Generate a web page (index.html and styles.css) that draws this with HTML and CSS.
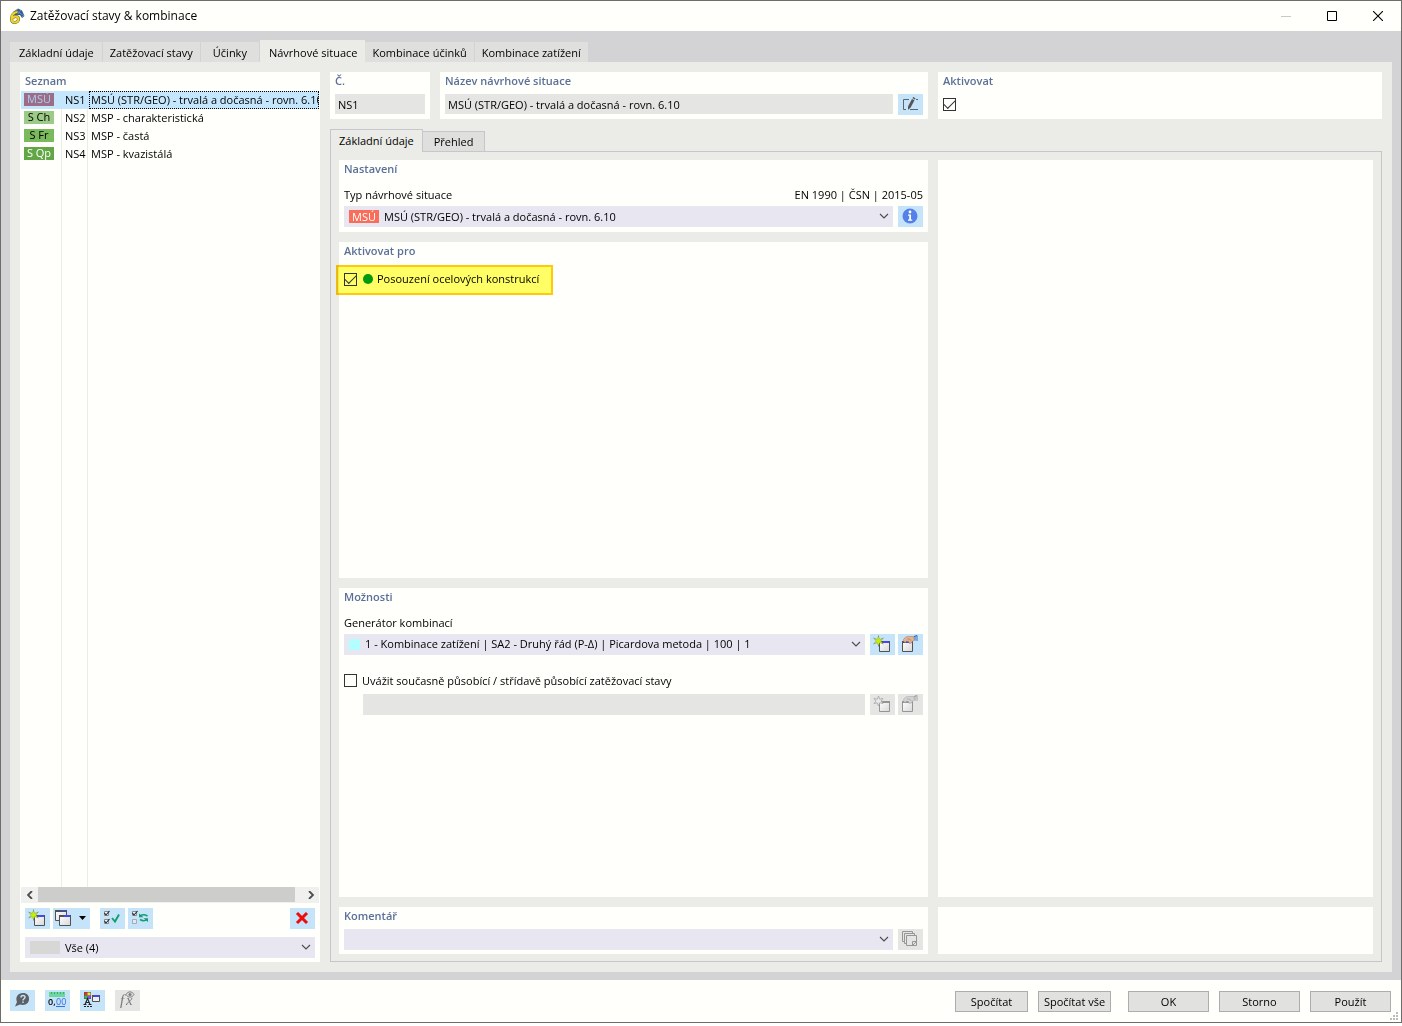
FILE: index.html
```html
<!DOCTYPE html>
<html lang="cs">
<head>
    <meta charset="UTF-8">
    <meta name="viewport" content="width=device-width, initial-scale=1.0">
    <title>Zatěžovací stavy &amp; kombinace</title>
    <link rel="stylesheet" href="styles.css">
</head>
<body>
    <svg class="symbols" aria-hidden="true">
        <defs>
            <linearGradient id="sheet" x1="0" y1="0" x2="1" y2="1">
                <stop offset="0" stop-color="#fff"/>
                <stop offset="1" stop-color="#d8d8d8"/>
            </linearGradient>
        </defs>
        <symbol id="chevron" viewBox="0 0 10 6">
            <path d="M1 1l4 4 4-4" fill="none" stroke="#4b4b4b" stroke-width="1.1"/>
        </symbol>
        <symbol id="new" viewBox="0 0 25 21">
            <path d="M9.500 7.500h10v10h-10z" fill="url(#sheet)" stroke="#4f5255"/>
            <path d="M9 7h11v2H9z" fill="#4f5255"/>
            <path d="M13 7h6v2h-6z" fill="#4747ee"/>
            <path d="M8.500 1.500v11M3.500 4l10 6M13.500 4l-10 6" stroke="#6b7a6a" stroke-width=".8"/>
            <path d="M8.500 2.500l1.200 2.700 2.800-.4-1.600 2.200 1.600 2.200-2.800-.4-1.200 2.700-1.200-2.700-2.800.4 1.600-2.200-1.600-2.200 2.800.4z" fill="#c3f000" stroke="#7d9440" stroke-width=".4"/>
        </symbol>
        <symbol id="new-off" viewBox="0 0 25 21">
            <path d="M9.500 7.500h10v10h-10z" fill="url(#sheet)" stroke="#949494"/>
            <path d="M9 7h11v2H9z" fill="#949494"/>
            <path d="M8.500 2l1.200 3.200 3.300-.7-2 2.500 2 2.500-3.300-.7-1.200 3.200-1.200-3.200-3.300.7 2-2.500-2-2.500 3.300.7z" fill="#e9e9e9" stroke="#a5a5a5" stroke-width=".8"/>
        </symbol>
        <symbol id="edit" viewBox="0 0 25 21">
            <path d="M4.500 7.500h10v10h-10z" fill="url(#sheet)" stroke="#4f5255"/>
            <path d="M4 7h11v2H4z" fill="#4f5255"/>
            <path d="M8 7h6v2H8z" fill="#4747ee"/>
            <path d="M15 3l3-1.500h2v5.500l-4-.5z" fill="#78a9e0"/>
            <path d="M16 2.500l3-1" stroke="#35639c"/>
            <path d="M5.500 5.500c1-2 3-3 5-3h5l1 3.500-2 1-1 2-2 .5-1-2-2-.5-1 1.500-1.500-.5z" fill="#e3b494" stroke="#a5714e" stroke-width=".5"/>
            <path d="M9 5h3l1 2" fill="none" stroke="#a5714e" stroke-width=".6"/>
        </symbol>
        <symbol id="edit-off" viewBox="0 0 25 21">
            <path d="M4.500 7.500h10v10h-10z" fill="url(#sheet)" stroke="#949494"/>
            <path d="M4 7h11v2H4z" fill="#949494"/>
            <path d="M15 3l3-1.500h2v5.500l-4-.5z" fill="#c6c6c6"/>
            <path d="M16 2.500l3-1" stroke="#9a9a9a"/>
            <path d="M5.500 5.500c1-2 3-3 5-3h5l1 3.500-2 1-1 2-2 .5-1-2-2-.5-1 1.500-1.500-.5z" fill="#d3d3d3" stroke="#a0a0a0" stroke-width=".5"/>
            <path d="M9 5h3l1 2" fill="none" stroke="#a0a0a0" stroke-width=".6"/>
        </symbol>
    </svg>

    <div class="window">
        <header class="titlebar">
            <svg class="app-icon" viewBox="0 0 16 16" aria-hidden="true">
                <path d="M4 4l5-3.500 4 2 2.500 5.500-2.500 2-2-3H6z" fill="#2f5c94"/>
                <path d="M6 2l8 5M9 1L6 5M12 2L9 6M15 7l-2 2" stroke="#7ba0c8" stroke-width=".7"/>
                <path d="M8.500 4C5 4.500 2.500 7 2.500 10.500S4 14.500 6 14.500s3.500-1.500 3.500-3.300S8 8.500 6.500 8.500s-2.500 1-3.500 2" fill="none" stroke="#6a6020" stroke-width="3"/>
                <path d="M8.500 4C5 4.500 2.500 7 2.500 10.500S4 14.500 6 14.500s3.500-1.500 3.500-3.300S8 8.500 6.500 8.500s-2.500 1-3.500 2" fill="none" stroke="#f0d62a" stroke-width="2"/>
            </svg>
            <h1>Zatěžovací stavy &amp; kombinace</h1>
            <div class="window-buttons">
                <button type="button" aria-label="Minimalizovat" disabled>
                    <svg viewBox="0 0 10 10"><path d="M0 5.500h10" stroke="#c9cac7"/></svg>
                </button>
                <button type="button" aria-label="Maximalizovat">
                    <svg viewBox="0 0 10 10"><path d="M.5.5h9v9h-9z" fill="none" stroke="#000"/></svg>
                </button>
                <button type="button" aria-label="Zavřít">
                    <svg viewBox="0 0 10 10"><path d="M0 0l10 10M10 0L0 10" stroke="#000" stroke-width="1.100"/></svg>
                </button>
            </div>
        </header>

        <main class="content">
            <nav class="tabs">
                <button type="button" class="tab tab-first">Základní údaje</button>
                <button type="button" class="tab">Zatěžovací stavy</button>
                <button type="button" class="tab tab-short">Účinky</button>
                <button type="button" class="tab active">Návrhové situace</button>
                <button type="button" class="tab">Kombinace účinků</button>
                <button type="button" class="tab">Kombinace zatížení</button>
            </nav>

            <div class="page">
                <section class="list-panel">
                    <h2>Seznam</h2>
                    <div class="list">
                        <table>
                            <tbody>
                                <tr class="selected">
                                    <td class="col-badge"><span class="badge badge-uls-selected">MSÚ</span></td>
                                    <td class="col-no">NS1</td>
                                    <td class="col-name">MSÚ (STR/GEO) - trvalá a dočasná - rovn. 6.10</td>
                                </tr>
                                <tr>
                                    <td class="col-badge"><span class="badge badge-ch">S Ch</span></td>
                                    <td class="col-no">NS2</td>
                                    <td class="col-name">MSP - charakteristická</td>
                                </tr>
                                <tr>
                                    <td class="col-badge"><span class="badge badge-fr">S Fr</span></td>
                                    <td class="col-no">NS3</td>
                                    <td class="col-name">MSP - častá</td>
                                </tr>
                                <tr>
                                    <td class="col-badge"><span class="badge badge-qp">S Qp</span></td>
                                    <td class="col-no">NS4</td>
                                    <td class="col-name">MSP - kvazistálá</td>
                                </tr>
                            </tbody>
                        </table>
                    </div>
                    <div class="scrollbar">
                        <button type="button" aria-label="Posunout vlevo">
                            <svg viewBox="0 0 6 8"><path d="M5 0L1 4l4 4" fill="none" stroke="#4b4b4b" stroke-width="1.800"/></svg>
                        </button>
                        <div class="scroll-thumb"></div>
                        <button type="button" aria-label="Posunout vpravo">
                            <svg viewBox="0 0 6 8"><path d="M1 0l4 4-4 4" fill="none" stroke="#4b4b4b" stroke-width="1.800"/></svg>
                        </button>
                    </div>
                    <div class="toolbar">
                        <button type="button" class="icon-button" aria-label="Nový"><svg viewBox="0 0 25 21"><use href="#new"/></svg></button>
                        <button type="button" class="icon-button wide" aria-label="Kopírovat">
                            <svg viewBox="0 0 37 21">
                                <path d="M2.500 2.500h11v10h-11z" fill="url(#sheet)" stroke="#4f5255"/>
                                <path d="M2 2h12v2H2z" fill="#4f5255"/>
                                <path d="M8 2h5v1H8z" fill="#4747ee"/>
                                <path d="M6.500 7.500h11v10h-11z" fill="url(#sheet)" stroke="#4f5255"/>
                                <path d="M6 7h12v2H6z" fill="#4f5255"/>
                                <path d="M11 7h6v2h-6z" fill="#4747ee"/>
                                <path d="M26 8h7l-3.500 4z" fill="#000"/>
                            </svg>
                        </button>
                        <button type="button" class="icon-button group-start" aria-label="Vybrat vše">
                            <svg viewBox="0 0 25 21">
                                <path d="M4.500 3.500h4v4h-4zM4.500 11.500h4v4h-4z" fill="#f2f6fa" stroke="#8a8a8a"/>
                                <path d="M4.500 5l1.500 2 3.500-4M4.500 13l1.500 2 3.500-4" fill="none" stroke="#222" stroke-width="1.100"/>
                                <path d="M12 10l3 3.500 4-7" fill="none" stroke="#10a070" stroke-width="1.900"/>
                            </svg>
                        </button>
                        <button type="button" class="icon-button" aria-label="Obrátit výběr">
                            <svg viewBox="0 0 25 21">
                                <path d="M4.500 3.500h4v4h-4z" fill="#f2f6fa" stroke="#8a8a8a"/>
                                <path d="M4.500 11.500h4v4h-4z" fill="#dcebf7" stroke="#a3abb3"/>
                                <path d="M4.500 5l1.500 2 3.500-4" fill="none" stroke="#222" stroke-width="1.100"/>
                                <path d="M12 8c2-1.500 5-1.500 7.500 0M19 11.500c-2 1.500-4.500 1.500-7 0" fill="none" stroke="#10a070" stroke-width="1.500"/>
                                <path d="M11 5.500v3.800h4.500zM20 14v-3.800h-4.500z" fill="#10a070"/>
                            </svg>
                        </button>
                        <button type="button" class="icon-button push-right" aria-label="Smazat">
                            <svg viewBox="0 0 25 21"><path d="M7 5l10 10M17 5L7 15" stroke="#f00a0a" stroke-width="3"/></svg>
                        </button>
                    </div>
                    <div class="combo">
                        <span class="swatch-gray"></span>
                        <select aria-label="Filtr seznamu"><option>Vše (4)</option></select>
                        <svg class="arrow"><use href="#chevron"/></svg>
                    </div>
                </section>

                <div class="detail">
                    <div class="head">
                        <section class="card">
                            <h2><label for="number">Č.</label></h2>
                            <input type="text" id="number" class="text-input" value="NS1" readonly>
                        </section>
                        <section class="card">
                            <h2><label for="name">Název návrhové situace</label></h2>
                            <div class="field-row">
                                <input type="text" id="name" class="text-input" value="MSÚ (STR/GEO) - trvalá a dočasná - rovn. 6.10" readonly>
                                <button type="button" class="icon-button" aria-label="Upravit název">
                                    <svg viewBox="0 0 25 21">
                                        <path d="M11 5.500H5.500v10H8M12 15.500h8M18 5.500h2" fill="none" stroke="#5f6468"/>
                                        <path d="M10 12.500l4-7.500 2.500 1.200-4 7.500-2.500 2z" fill="#555"/>
                                        <path d="M14.500 4.200l.7-1.200 2.300 1.200-.6 1.200z" fill="#555"/>
                                    </svg>
                                </button>
                            </div>
                        </section>
                        <section class="card">
                            <h2><label for="active">Aktivovat</label></h2>
                            <div class="field-row"><input type="checkbox" id="active" checked></div>
                        </section>
                    </div>

                    <nav class="subtabs">
                        <button type="button" class="subtab active">Základní údaje</button>
                        <button type="button" class="subtab">Přehled</button>
                    </nav>

                    <div class="tab-page">
                        <div class="stack">
                            <section class="card settings">
                                <h2>Nastavení</h2>
                                <div class="caption">
                                    <label for="type">Typ návrhové situace</label>
                                    <span>EN 1990 | ČSN | 2015-05</span>
                                </div>
                                <div class="field-row">
                                    <div class="combo">
                                        <span class="badge badge-uls">MSÚ</span>
                                        <select id="type"><option>MSÚ (STR/GEO) - trvalá a dočasná - rovn. 6.10</option></select>
                                        <svg class="arrow"><use href="#chevron"/></svg>
                                    </div>
                                    <button type="button" class="icon-button" aria-label="Informace">
                                        <svg viewBox="0 0 25 21">
                                            <circle cx="12" cy="10" r="7.500" fill="#5580ea"/>
                                            <path d="M10 8.500h3v5h1.200v1.200h-4.200v-1.200h1.200v-3.800H10z" fill="#fff"/>
                                            <circle cx="12" cy="6" r="1.400" fill="#fff"/>
                                        </svg>
                                    </button>
                                </div>
                            </section>

                            <section class="card activate-for">
                                <h2>Aktivovat pro</h2>
                                <label class="highlight">
                                    <input type="checkbox" checked>
                                    <span class="dot"></span>
                                    Posouzení ocelových konstrukcí
                                </label>
                            </section>

                            <section class="card options">
                                <h2>Možnosti</h2>
                                <div class="caption"><label for="generator">Generátor kombinací</label></div>
                                <div class="field-row">
                                    <div class="combo">
                                        <span class="swatch-cyan"></span>
                                        <select id="generator"><option>1 - Kombinace zatížení | SA2 - Druhý řád (P-Δ) | Picardova metoda | 100 | 1</option></select>
                                        <svg class="arrow"><use href="#chevron"/></svg>
                                    </div>
                                    <div class="button-pair">
                                        <button type="button" class="icon-button" aria-label="Nový generátor"><svg viewBox="0 0 25 21"><use href="#new"/></svg></button>
                                        <button type="button" class="icon-button" aria-label="Upravit generátor"><svg viewBox="0 0 25 21"><use href="#edit"/></svg></button>
                                    </div>
                                </div>
                                <label class="check-row">
                                    <input type="checkbox" id="concurrent">
                                    Uvážit současně působící / střídavě působící zatěžovací stavy
                                </label>
                                <div class="field-row indented">
                                    <select class="disabled-select" aria-label="Současně působící zatěžovací stavy" disabled><option></option></select>
                                    <div class="button-pair">
                                        <button type="button" class="icon-button" aria-label="Nový" disabled><svg viewBox="0 0 25 21"><use href="#new-off"/></svg></button>
                                        <button type="button" class="icon-button" aria-label="Upravit" disabled><svg viewBox="0 0 25 21"><use href="#edit-off"/></svg></button>
                                    </div>
                                </div>
                            </section>
                        </div>

                        <section class="card"></section>

                        <section class="card">
                            <h2><label for="comment">Komentář</label></h2>
                            <div class="field-row">
                                <div class="combo">
                                    <select id="comment"><option></option></select>
                                    <svg class="arrow"><use href="#chevron"/></svg>
                                </div>
                                <button type="button" class="icon-button" aria-label="Použít komentář" disabled>
                                    <svg viewBox="0 0 25 21">
                                        <path d="M6.500 12.500h-2v-10h10v2M8.500 14.500h-2v-10h10v2M8.500 6.500h10v10h-10z" fill="none" stroke="#979797"/>
                                        <path d="M14.500 16v-3.500H18M15 16l3-3" fill="none" stroke="#979797"/>
                                    </svg>
                                </button>
                            </div>
                        </section>

                        <section class="card"></section>
                    </div>
                </div>
            </div>
        </main>

        <footer class="footer">
            <div class="tools">
                <button type="button" class="icon-button" aria-label="Nápověda">
                    <svg viewBox="0 0 25 21">
                        <path d="M5 16.500l2-4.500C5 7 8 3 13 3c4 0 6 2.500 6 6 0 4.500-4 7-9 5.500z" fill="#5c6064"/>
                        <path d="M11 7.500c0-2.500 4-2.500 4-.3 0 1.600-2 1.500-2 3.200M13 11.500v1.500" fill="none" stroke="#c5e2f8" stroke-width="1.500"/>
                    </svg>
                </button>
                <button type="button" class="icon-button" aria-label="Jednotky a desetinná místa">
                    <svg viewBox="0 0 25 21">
                        <path d="M4 2h16v5H4z" fill="#6fd79d"/>
                        <path d="M6.500 2v2M9.500 2v2M12.500 2v2M15.500 2v2M18.500 2v2" stroke="#2fa467" stroke-width=".8"/>
                        <text x="3" y="15" class="icon-digits">0,</text>
                        <text x="11" y="15" class="icon-digits blue">00</text>
                        <path d="M11 16.500h9" stroke="#3b6be0"/>
                    </svg>
                </button>
                <button type="button" class="icon-button" aria-label="Zobrazení">
                    <svg viewBox="0 0 25 21">
                        <path d="M4 2h7v7H4z" fill="#555"/>
                        <path d="M4.500 2.500h3v3h-3z" fill="#f22"/>
                        <path d="M7.500 2.500h3v3h-3z" fill="#f3e52b"/>
                        <path d="M4.500 5.500h3v3h-3z" fill="#25c84a"/>
                        <path d="M7.500 5.500h3v3h-3z" fill="#8a4bf0"/>
                        <path d="M5 14.500l2.500-6 2.500 6M6 12.500h3M3.500 14.500h3M8.500 14.500h3" fill="none" stroke="#222" stroke-width="1.100"/>
                        <path d="M4 16.500h8" stroke="#222" stroke-dasharray="2 1"/>
                        <path d="M12.500 5.500h7v6h-7z" fill="#eee" stroke="#4f5255"/>
                        <path d="M12 5h8v2h-8z" fill="#4f5255"/>
                        <path d="M14 5h5v2h-5z" fill="#4747ee"/>
                    </svg>
                </button>
                <button type="button" class="icon-button" aria-label="Vzorec" disabled>
                    <svg viewBox="0 0 25 21">
                        <text x="5" y="15" class="icon-formula">f</text>
                        <text x="11" y="15" class="icon-formula">x</text>
                        <path d="M11 4.500c2-3.500 6-3.500 8 0-2 3.500-6 3.500-8 0z" fill="#e4e4e2" stroke="#7f7f7f"/>
                        <circle cx="15" cy="4.500" r="1.600" fill="#7f7f7f"/>
                    </svg>
                </button>
            </div>
            <div class="actions">
                <button type="button" class="action">Spočítat</button>
                <button type="button" class="action">Spočítat vše</button>
                <button type="button" class="action main-action first-main">OK</button>
                <button type="button" class="action main-action">Storno</button>
                <button type="button" class="action main-action">Použít</button>
            </div>
            <svg class="grip" viewBox="0 0 8 8" aria-hidden="true">
                <path d="M6 0h2v2H6zM3 3h2v2H3zM6 3h2v2H6zM0 6h2v2H0zM3 6h2v2H3zM6 6h2v2H6z" fill="#bcbcbc"/>
            </svg>
        </footer>
    </div>
</body>
</html>
```

FILE: styles.css
```css
* {
    box-sizing: border-box;
}
body {
    margin: 0;
    background-color: #fff;
    color: #000;
    font-family: "Open Sans", "Noto Sans", sans-serif;
    font-size: 11px;
    line-height: 18px;
}
button, input, select {
    font: inherit;
    color: inherit;
    margin: 0;
    padding: 0;
    border: none;
    border-radius: 0;
}
h1, h2 {
    margin: 0;
}
h1 {
    font-size: 12px;
    font-weight: normal;
}
h2 {
    height: 18px;
    margin-bottom: 4px;
    font-size: 11px;
    font-weight: 600;
    color: #5b7099;
}
svg {
    display: block;
}
.symbols {
    position: absolute;
    width: 0;
    height: 0;
}
.window {
    display: flex;
    flex-direction: column;
    min-height: calc(100vh - 3px);
    border: 1px solid #6d6d6b;
    background-color: #fffffc;
}

/* title bar */
.titlebar {
    display: flex;
    align-items: center;
    height: 30px;
    padding-left: 8px;
}
.app-icon {
    width: 16px;
    height: 16px;
    margin-right: 5px;
}
.window-buttons {
    display: flex;
    margin-left: auto;
}
.window-buttons button {
    display: flex;
    align-items: center;
    justify-content: center;
    width: 46px;
    height: 28px;
    background: none;
}
.window-buttons svg {
    width: 10px;
    height: 10px;
}

/* main tabs */
.content {
    flex: 1;
    display: flex;
    flex-direction: column;
    padding: 9px 9px 8px;
    background-color: #d3d3d6;
}
.tabs {
    display: flex;
    align-items: flex-end;
    height: 22px;
}
.tab {
    height: 20px;
    padding: 2px 7px 0;
    border-right: 1px solid #d3d3d6;
    background-color: #dfdfdd;
}
.tab-first {
    padding-left: 9px;
    padding-right: 8px;
}
.tab-short {
    padding: 2px 12px 0;
}
.tab.active {
    height: 22px;
    padding: 4px 8px 0 9px;
    border-right: none;
    background-color: #ebece8;
}
.page {
    flex: 1;
    display: flex;
    gap: 10px;
    padding: 10px;
    background-color: #ebece8;
}

/* list */
.list-panel {
    display: flex;
    flex-direction: column;
    width: 300px;
    padding-bottom: 4px;
    background-color: #fffffc;
}
.list-panel h2 {
    margin: 0 5px 1px;
}
.list {
    flex: 1;
    margin: 0 1px;
    overflow: hidden;
    background-image: linear-gradient(#ebece8, #ebece8), linear-gradient(#ebece8, #ebece8);
    background-repeat: no-repeat;
    background-position: 40px 0, 66px 0;
    background-size: 1px 100%;
}
.list table {
    width: 100%;
    table-layout: fixed;
    border-collapse: collapse;
}
.list td {
    height: 18px;
    padding: 0;
    line-height: 18px;
    white-space: nowrap;
    overflow: hidden;
}
.list .col-badge {
    width: 40px;
    padding: 0 0 1px 3px;
    vertical-align: middle;
}
.list .col-no {
    width: 28px;
    padding-left: 4px;
}
.list .col-name {
    padding-left: 2px;
}
.list .selected {
    background-color: #c5e7fe;
}
.list .selected .col-name {
    outline: 1px dotted #000;
    outline-offset: -1px;
}
.badge {
    display: block;
    flex: none;
    width: 30px;
    height: 13px;
    line-height: 13px;
    text-align: center;
}
.list .badge {
    line-height: 12px;
}
.badge-uls {
    background-color: #f86e5a;
    color: #fff;
}
.badge-uls-selected {
    background-color: #9d6d88;
    color: #a9cdf3;
}
.badge-ch {
    background-color: #9ccb87;
}
.badge-fr {
    background-color: #7ab95c;
}
.badge-qp {
    background-color: #63a645;
    color: #fff;
}
.scrollbar {
    display: flex;
    height: 16px;
    margin: 0 1px 5px;
    background-color: #f0f0ee;
}
.scrollbar button {
    display: flex;
    align-items: center;
    justify-content: center;
    width: 17px;
    background: none;
}
.scrollbar svg {
    width: 6px;
    height: 8px;
}
.scroll-thumb {
    flex: 1;
    height: 15px;
    margin-right: 7px;
    background-color: #cdcdcb;
}
.toolbar {
    display: flex;
    gap: 3px;
    margin: 0 5px 8px;
}
.list-panel .combo {
    flex: none;
    margin: 0 5px;
}
.icon-button {
    flex: none;
    width: 25px;
    height: 21px;
    background-color: #c5e3f9;
}
.icon-button.wide {
    width: 37px;
}
.icon-button:disabled {
    background-color: #e5e5e3;
}
.icon-button svg {
    width: 100%;
    height: 100%;
}
.group-start {
    margin-left: 7px;
}
.push-right {
    margin-left: auto;
}

/* fields */
.combo {
    position: relative;
    flex: 1;
    display: flex;
    align-items: center;
    height: 21px;
    padding-left: 5px;
    background-color: #e8e6f1;
}
.combo select {
    flex: 1;
    min-width: 0;
    height: 21px;
    padding-left: 5px;
    appearance: none;
    background: none;
}
.combo .arrow {
    position: absolute;
    right: 4px;
    top: 7px;
    width: 10px;
    height: 6px;
    pointer-events: none;
}
.swatch-gray {
    width: 30px;
    height: 13px;
    background-color: #d7d7d5;
}
.swatch-cyan {
    width: 11px;
    height: 11px;
    background-color: #b3ffff;
}
.text-input {
    flex: 1;
    width: 100%;
    min-width: 0;
    height: 20px;
    padding-left: 3px;
    background-color: #e5e5e3;
}
.field-row {
    display: flex;
    gap: 5px;
    height: 21px;
}
.button-pair {
    display: flex;
    gap: 3px;
}
.caption {
    display: flex;
    justify-content: space-between;
    margin: 8px 0 2px;
}
.disabled-select {
    flex: 1;
    appearance: none;
    background-color: #e5e5e3;
    opacity: 1;
}
input[type="checkbox"] {
    flex: none;
    display: grid;
    place-items: center;
    width: 13px;
    height: 13px;
    border: 1px solid #333;
    appearance: none;
    background-color: #fffffc;
}
input[type="checkbox"]:checked::before {
    content: "";
    width: 10px;
    height: 5px;
    margin-top: -3px;
    border-left: 1px solid #333;
    border-bottom: 1px solid #333;
    transform: rotate(-45deg);
}

/* detail */
.detail {
    flex: 1;
    display: flex;
    flex-direction: column;
    min-width: 0;
}
.card {
    padding: 0 5px 4px;
    background-color: #fffffc;
}
.head {
    display: grid;
    grid-template-columns: 100px minmax(0, 488fr) minmax(0, 444fr);
    gap: 10px;
    margin-bottom: 10px;
}
.head input[type="checkbox"] {
    margin-top: 4px;
}
.subtabs {
    display: flex;
    align-items: flex-end;
    height: 23px;
    margin-bottom: -1px;
}
.subtab {
    height: 21px;
    padding: 0 11px;
    border: 1px solid #c6c7cc;
    border-left: none;
    background-color: #dfdfdd;
}
.subtab.active {
    height: 23px;
    padding: 0 8px;
    border-left: 1px solid #c6c7cc;
    border-bottom: none;
    background-color: #ebece8;
    z-index: 1;
}
.tab-page {
    flex: 1;
    display: grid;
    grid-template-columns: minmax(0, 589fr) minmax(0, 435fr);
    grid-template-rows: 1fr auto;
    gap: 10px;
    padding: 8px 8px 7px;
    border: 1px solid #c6c7cc;
}
.stack {
    display: flex;
    flex-direction: column;
    gap: 10px;
}
.settings {
    padding-bottom: 5px;
}
.activate-for {
    flex: 336 1 0;
}
.options {
    flex: 309 1 0;
}
.highlight {
    display: inline-flex;
    align-items: center;
    height: 30px;
    margin: 1px 0 0 -8px;
    padding: 0 12px 2px 6px;
    border: 2px solid #ffc90e;
    background-color: #ffff66;
    mix-blend-mode: multiply;
}
.highlight input[type="checkbox"] {
    background-color: transparent;
}
.dot {
    width: 10px;
    height: 10px;
    margin: 0 4px 0 6px;
    border-radius: 50%;
    background-color: #009a0f;
}
.check-row {
    display: flex;
    align-items: center;
    gap: 5px;
    margin: 17px 0 4px;
}
.indented {
    margin-left: 19px;
}

/* footer */
.footer {
    position: relative;
    display: flex;
    justify-content: space-between;
    height: 42px;
    padding: 10px 10px 0 9px;
}
.tools {
    display: flex;
    gap: 10px;
}
.actions {
    display: flex;
    gap: 10px;
    padding-top: 1px;
}
.action {
    width: 73px;
    height: 21px;
    border: 1px solid #adadad;
    background-color: #e1e1df;
    white-space: nowrap;
}
.main-action {
    width: 81px;
}
.first-main {
    margin-left: 7px;
}
.grip {
    position: absolute;
    right: 3px;
    bottom: 2px;
    width: 8px;
    height: 8px;
}
.icon-digits {
    font-size: 9px;
    font-weight: 600;
}
.icon-digits.blue {
    font-weight: normal;
    fill: #3b6be0;
}
.icon-formula {
    font-family: "Liberation Serif", serif;
    font-size: 15px;
    font-style: italic;
    fill: #7a7a7a;
}
```
